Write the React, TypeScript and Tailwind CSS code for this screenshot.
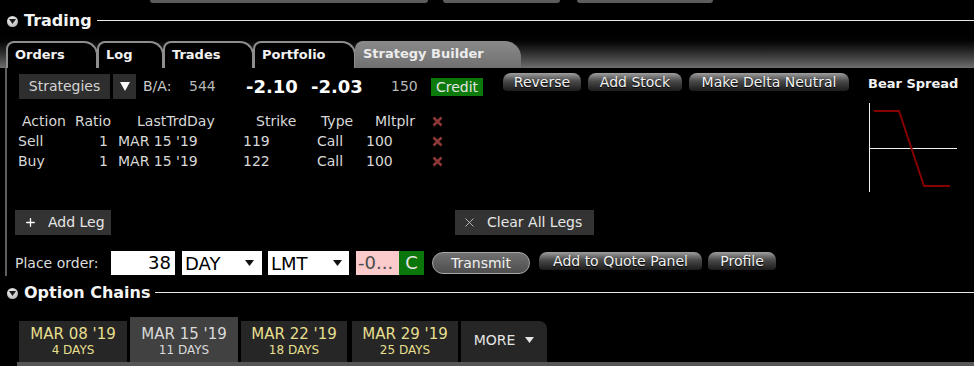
import { Plus, X } from "lucide-react"

const TABS = [
  { label: "Orders", w: "w-[92px]" },
  { label: "Log", w: "w-[67px]" },
  { label: "Trades", w: "w-[91px]" },
  { label: "Portfolio", w: "w-[103px]" },
]

const EXPIRIES = [
  { date: "MAR 08 '19", days: "4 DAYS", w: "w-[108px]", ml: "" },
  { date: "MAR 15 '19", days: "11 DAYS", w: "w-[108px]", ml: "ml-[3px]", active: true },
  { date: "MAR 22 '19", days: "18 DAYS", w: "w-[106px]", ml: "ml-[3px]" },
  { date: "MAR 29 '19", days: "25 DAYS", w: "w-[106px]", ml: "ml-[5px]" },
]

const LEGS = [
  { action: "Sell", strike: "119" },
  { action: "Buy", strike: "122" },
]

function Disclosure() {
  return (
    <span className="flex size-[11px] items-center justify-center rounded-full bg-[radial-gradient(circle_at_40%_35%,#f2f2f2,#a9a9a9)]">
      <svg width="7" height="5" viewBox="0 0 7 5">
        <polygon points="0,0 7,0 3.5,5" fill="#1a1a1a" />
      </svg>
    </span>
  )
}

function SectionHeader({ title }: { title: string }) {
  return (
    <div className="flex h-[18px] items-start pl-[7px]">
      <span className="mt-[4px]">
        <Disclosure />
      </span>
      <span className="ml-[6px] text-[16px] font-bold leading-[18px] text-[#f4f4f4]">{title}</span>
      <span className="ml-[5px] mt-[8px] h-px flex-1 bg-[#e8e8e8]" />
    </div>
  )
}

function GlossButton({ label, w }: { label: string; w: string }) {
  return (
    <button
      className={`${w} h-[18px] rounded-t-[8px] rounded-b-[4px] bg-linear-to-b from-[#a0a0a0] via-[#4a4a4a] via-45% to-[#1c1c1c] text-center text-[14px] leading-[18px] text-[#f2f2f2] [text-shadow:0_1px_1px_#000]`}
    >
      {label}
    </button>
  )
}

function RemoveX() {
  return (
    <svg width="11" height="11" viewBox="0 0 11 11">
      <path d="M1.5 1.5 L9.5 9.5 M9.5 1.5 L1.5 9.5" stroke="#8c3838" strokeWidth="2.6" />
    </svg>
  )
}

function Caret() {
  return (
    <svg width="9" height="6" viewBox="0 0 9 6">
      <polygon points="0,0 9,0 4.5,6" fill="#111" />
    </svg>
  )
}

export default function App() {
  return (
    <div className="h-[366px] w-[974px] overflow-hidden bg-black font-['DejaVu_Sans',sans-serif] text-white">
      {/* bottoms of the toolbar buttons above */}
      <div className="flex h-[3px] pl-[150px]">
        <span className="w-[278px] rounded-b-[4px] bg-[#5c5c5c]" />
        <span className="ml-[15px] w-[117px] rounded-b-[4px] bg-[#5c5c5c]" />
        <span className="ml-[17px] w-[136px] rounded-b-[4px] bg-[#5c5c5c]" />
      </div>

      <div className="mt-[9px]">
        <SectionHeader title="Trading" />
      </div>

      {/* tab strip */}
      <div className="flex h-[38px] items-end bg-linear-to-b from-black from-10% to-[#6e6e6e] pl-[6px]">
        {TABS.map((t) => (
          <div
            key={t.label}
            className={`${t.w} -mr-px h-[27px] rounded-tl-[8px] rounded-tr-[14px] border-x-2 border-t-2 border-[#8e8e8e] bg-black pl-[7px] text-[13px] font-bold leading-[23px] text-[#f2f2f2]`}
          >
            {t.label}
          </div>
        ))}
        <div className="h-[27px] w-[166px] rounded-tl-[8px] rounded-tr-[16px] bg-linear-to-b from-[#8a8a8a] to-[#707070] pl-[8px] text-[13px] font-bold leading-[25px] text-[#ececec]">
          Strategy Builder
        </div>
      </div>

      {/* strategy builder body */}
      <div className="ml-[5px] flex h-[208px] border-l-2 border-[#5e5e5e]">
        <div className="w-[855px]">
          {/* summary row */}
          <div className="mt-[6px] flex h-[25px] items-center text-[14px] text-[#c9c9c9]">
            <button className="ml-[12px] h-[25px] w-[91px] bg-[#2e2e2e] text-[14px] text-[#d4d4d4]">Strategies</button>
            <button className="ml-[3px] flex h-[25px] w-[23px] items-center justify-center bg-[#2e2e2e]">
              <svg width="10" height="9" viewBox="0 0 10 9">
                <polygon points="0,0 10,0 5,9" fill="#fafafa" />
              </svg>
            </button>
            <span className="ml-[7px] w-[46px]">B/A:</span>
            <span className="w-[57px] text-[#b8b8b8]">544</span>
            <span className="w-[65px] text-[18px] font-bold text-white">-2.10</span>
            <span className="w-[80px] text-[18px] font-bold text-white">-2.03</span>
            <span className="w-[40px] text-[#b8b8b8]">150</span>
            <span className="h-[18px] w-[52px] bg-[#0b7a0b] text-center text-[14px] leading-[18px] text-[#e4e4e4]">Credit</span>
            <div className="-mt-[9px] ml-[20px] flex gap-[7px] self-center">
              <GlossButton label="Reverse" w="w-[78px]" />
              <GlossButton label="Add Stock" w="w-[94px]" />
              <GlossButton label="Make Delta Neutral" w="w-[160px]" />
            </div>
          </div>

          {/* legs table */}
          <div className="mt-[13px] text-[14px] text-[#d8d8d8]">
            <div className="flex h-[19px] items-center pl-[15px] leading-[19px]">
              <span className="w-[53px]">Action</span>
              <span className="w-[62px]">Ratio</span>
              <span className="w-[119px]">LastTrdDay</span>
              <span className="w-[65px]">Strike</span>
              <span className="w-[54px]">Type</span>
              <span className="w-[57px]">Mltplr</span>
              <RemoveX />
            </div>
            {LEGS.map((l) => (
              <div key={l.action} className="flex h-[20px] items-center pl-[11px] leading-[20px]">
                <span className="w-[72px]">{l.action}</span>
                <span className="w-[18px] text-right">1</span>
                <span className="ml-[10px] w-[125px]">MAR 15 '19</span>
                <span className="w-[74px]">{l.strike}</span>
                <span className="w-[49px]">Call</span>
                <span className="w-[66px]">100</span>
                <RemoveX />
              </div>
            ))}
          </div>

          {/* leg actions */}
          <div className="mt-[39px] flex h-[25px] text-[14px] text-[#e6e6e6]">
            <button className="ml-[8px] flex h-[25px] w-[96px] items-center bg-[#333] pl-[9px]">
              <Plus size={13} strokeWidth={2.4} className="text-white" />
              <span className="ml-[11px]">Add Leg</span>
            </button>
            <button className="ml-[344px] flex h-[25px] w-[139px] items-center bg-[#333] pl-[7px]">
              <X size={15} strokeWidth={1.4} className="text-[#c4c4c4]" />
              <span className="ml-[10px]">Clear All Legs</span>
            </button>
          </div>

          {/* order entry */}
          <div className="mt-[16px] flex h-[24px] items-center text-[18px]">
            <span className="ml-[8px] w-[96px] text-[14px] text-[#dcdcdc]">Place order:</span>
            <span className="h-[24px] w-[64px] bg-white pr-[4px] text-right leading-[24px] text-black">38</span>
            <span className="ml-[7px] flex h-[24px] w-[80px] items-center justify-between bg-white pl-[3px] pr-[8px] text-black">
              DAY
              <Caret />
            </span>
            <span className="ml-[6px] flex h-[24px] w-[81px] items-center justify-between bg-white pl-[3px] pr-[7px] text-black">
              LMT
              <Caret />
            </span>
            <span className="ml-[7px] h-[24px] w-[43px] bg-[#fbcaca] pl-[2px] leading-[24px] text-[#4c4c4c]">-0...</span>
            <span className="h-[24px] w-[25px] bg-[#0b760b] text-center leading-[24px] text-[#e6e6e6]">C</span>
            <button className="ml-[8px] h-[22px] w-[98px] rounded-full border border-[#a8a8a8] bg-linear-to-b from-[#707070] to-[#4e4e4e] text-[14px] leading-[20px] text-[#f0f0f0]">
              Transmit
            </button>
            <div className="-mt-[5px] ml-[9px] flex gap-[6px]">
              <GlossButton label="Add to Quote Panel" w="w-[163px]" />
              <GlossButton label="Profile" w="w-[68px]" />
            </div>
          </div>
        </div>

        {/* strategy preview */}
        <div className="flex-1 pl-[6px] pt-[8px]">
          <div className="text-[13px] font-bold leading-[16px] text-[#f2f2f2]">Bear Spread</div>
          <svg className="mt-[10px]" width="92" height="92" viewBox="0 0 92 92">
            <line x1="1.5" y1="1" x2="1.5" y2="90" stroke="#f0f0f0" strokeWidth="1" />
            <line x1="1" y1="46.5" x2="89" y2="46.5" stroke="#f0f0f0" strokeWidth="1" />
            <polyline points="6,9 31,9 56,84 82,84" fill="none" stroke="#860000" strokeWidth="2" />
          </svg>
        </div>
      </div>

      <div className="mt-[8px]">
        <SectionHeader title="Option Chains" />
      </div>

      {/* expiries */}
      <div className="mt-[15px] flex h-[45px] items-end pl-[19px]">
        {EXPIRIES.map((e) => (
          <div
            key={e.date}
            className={`${e.w} ${e.ml} flex flex-col items-center justify-end pb-[5px] ${
              e.active ? "h-[45px] bg-[#414141] text-[#dadada]" : "h-[41px] bg-[#262626] text-[#e6df8e]"
            }`}
          >
            <span className="text-[15px] leading-[17px]">{e.date}</span>
            <span className="text-[12px] leading-[14px]">{e.days}</span>
          </div>
        ))}
        <div className="ml-[3px] flex h-[41px] w-[86px] items-center justify-center gap-[10px] rounded-tr-[8px] bg-[#262626] pb-[3px] text-[14px] text-[#e4e4e4]">
          MORE
          <svg width="9" height="6" viewBox="0 0 9 6">
            <polygon points="0,0 9,0 4.5,6" fill="#e4e4e4" />
          </svg>
        </div>
      </div>
      <div className="ml-[17px] h-[4px] bg-[#565656]" />
    </div>
  )
}
